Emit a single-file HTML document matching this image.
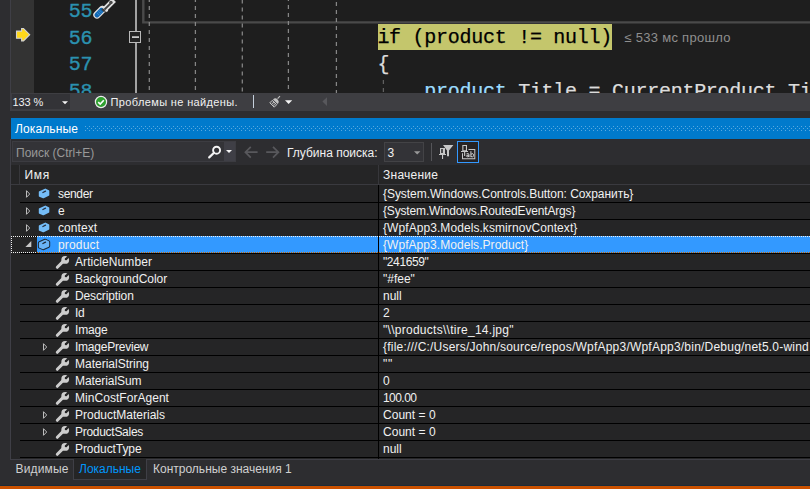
<!DOCTYPE html>
<html><head><meta charset="utf-8">
<style>
html,body{margin:0;padding:0;}
body{width:810px;height:489px;overflow:hidden;background:#2d2d30;position:relative;font-family:"Liberation Sans",sans-serif;font-size:12px;color:#f1f1f1;}
.abs,body>div,body>span,body>svg{position:absolute;}
#editor{left:11px;top:0;width:799px;height:93px;background:#1e1e1e;overflow:hidden;}
#margin{left:11px;top:0;width:23px;height:93px;background:#333333;}
.ln{left:68.8px;font-family:"Liberation Mono",monospace;font-size:20px;letter-spacing:-0.4px;color:#2b91af;-webkit-text-stroke:0.35px #2b91af;line-height:26px;white-space:pre;}
.code{font-family:"Liberation Mono",monospace;font-size:20px;letter-spacing:-0.27px;-webkit-text-stroke:0.25px currentColor;color:#dcdcdc;line-height:26px;white-space:pre;}
.guide{top:0;width:0;height:93px;border-left:1px dashed #7a7a7a;}
#statusrow{left:11px;top:93px;width:799px;height:18px;background:#3e3e42;}
#zoom{left:12px;top:94px;width:58px;height:15px;background:#333337;}
#title{left:11px;top:118px;width:799px;height:21px;background:#007acc;}
#search{left:12px;top:141px;width:224px;height:21px;background:#333337;border:1px solid #3c3c41;box-sizing:border-box;}
#grid{left:11px;top:165px;width:799px;height:294px;background:#252526;}
#hdrline{left:11px;top:184px;width:799px;height:1px;background:#3a3a3f;}
.row{position:absolute;left:0;width:810px;height:17px;}
.row .sep{position:absolute;left:20px;top:16px;width:790px;height:1px;background:#000;}
.row .n{position:absolute;top:0px;line-height:16px;white-space:pre;}
.row .v{position:absolute;left:383px;top:0px;line-height:16px;white-space:pre;}
.row .ic{position:absolute;}
.row .ex{position:absolute;}
.row.sel .selbg{position:absolute;left:37px;top:-1px;width:773px;height:17px;background:#3399ff;}
.row.sel .dots{position:absolute;left:11px;top:-1px;width:799px;height:17px;}
#vline{left:378px;top:185px;width:1px;height:274px;background:#000;}
#orange{left:0;top:486px;width:810px;height:3px;background:#ca5100;}
</style></head><body>
<div id="editor"></div>
<div id="margin"></div>
<div class="ln" style="top:-1.5px">55</div>
<div class="ln" style="top:26px">56</div>
<div class="ln" style="top:52.3px">57</div>
<div class="ln" style="top:79.3px">58</div>
<!-- scope box -->
<svg style="left:0;top:0" width="810" height="93" viewBox="0 0 810 93">
<path d="M143.3 0 L143.3 22.4 L810 22.4" fill="none" stroke="#4a4a4a" stroke-width="2.4"/>
<g stroke="#868686" stroke-width="1.25" stroke-dasharray="4 4" stroke-dashoffset="2">
<line x1="149.3" y1="0" x2="149.3" y2="93"/>
<line x1="195.4" y1="0" x2="195.4" y2="93"/>
<line x1="242.3" y1="0" x2="242.3" y2="93" stroke-dashoffset="0.5"/>
<line x1="288.4" y1="0" x2="288.4" y2="93" stroke-dashoffset="3"/>
<line x1="336.4" y1="0" x2="336.4" y2="93" stroke-dashoffset="6"/>
<line x1="383.4" y1="80" x2="383.4" y2="93" stroke-dashoffset="0" stroke="#606060"/>
</g>
<rect x="135" y="0" width="2" height="93" fill="#a2a2a2"/>
<rect x="129.5" y="31.5" width="11" height="11" fill="#232323" stroke="#b9b9b9" stroke-width="1"/>
<rect x="132" y="36.4" width="7" height="1.4" fill="#f4f4f4"/>
</svg>
<!-- code -->
<div style="left:378px;top:24px;width:234px;height:26px;background:#c4c66c"></div>
<div class="code" style="left:377.4px;top:25.2px;color:#000">if (product != null)</div>
<div class="code" style="left:377.4px;top:51.8px">{</div>
<div class="code" style="left:424.3px;top:78.5px"><span style="color:#9cdcfe">product</span>.Title = CurrentProduct.Title</div>
<div style="left:624.3px;top:30px;line-height:16px;color:#8f8f8f;font-size:13px;letter-spacing:0.3px;white-space:pre">≤ 533 мс прошло</div>

<div id="statusrow"></div>
<div style="left:0;top:111px;width:810px;height:7px;background:#2d2d30"></div>
<div style="left:0;top:93px;width:11px;height:20px;background:#2d2d30"></div>
<div style="left:10px;top:0;width:1px;height:111px;background:#3f3f46"></div>
<div id="zoom"></div>
<div style="left:12.5px;top:95px;line-height:15px;font-size:11px;letter-spacing:-0.1px;white-space:pre">133 %</div>
<div style="left:110.6px;top:95px;line-height:15px;font-size:11px;white-space:pre;letter-spacing:0.36px">Проблемы не найдены.</div>
<div style="left:253px;top:95px;width:1px;height:13px;background:#c5d0dc"></div>


<!-- editor icons -->
<svg style="left:11px;top:24px" width="24" height="22" viewBox="11 24 24 22"><path d="M16.5 31.1 L21.6 31.1 L21.6 28.5 L23.5 28.5 L29.7 34.7 L23.5 40.9 L21.6 40.9 L21.6 38.3 L16.5 38.3 Z" fill="#ffd81a" stroke="#d2d2d2" stroke-width="1.1" stroke-linejoin="miter"/></svg>
<svg style="left:90px;top:0" width="30" height="22" viewBox="90 0 30 22">
<path d="M104.2 9.8 L114 0" stroke="#e2e2e2" stroke-width="5.4" fill="none"/>
<path d="M102.2 5.4 L104.6 7.4 L102.4 9 Z M107.6 8.6 L108.2 11 L105.6 12.4 Z" fill="#e2e2e2"/>
<path d="M97 14.9 L102.2 9.7" stroke="#e2e2e2" stroke-width="7.4" stroke-linecap="round" fill="none"/>
<path d="M104.4 9.6 L110.4 3.6" stroke="#404040" stroke-width="2" fill="none"/>
<circle cx="110.9" cy="2.5" r="1.8" fill="#4a4a4a"/>
<path d="M97 14.9 L101.4 10.5" stroke="#0e67b4" stroke-width="5" stroke-linecap="round" fill="none"/>
<path d="M102.8 8.2 L105.4 10.8 L104 12.2 L101.4 9.6 Z" fill="#3e3e3e"/>
<path d="M98.2 11.4 L100.8 14 M99.6 10.2 L102.2 12.8 M96.9 12.8 L99.4 15.3" stroke="#5f9fd6" stroke-width="0.6" fill="none"/>
</svg>
<!-- status icons -->
<svg style="left:60px;top:99px" width="10" height="7" viewBox="0 0 10 7"><path d="M2 2.2 L8 2.2 L5 5.2 Z" fill="#f4f4f4"/></svg>
<svg style="left:94px;top:95px" width="14" height="14" viewBox="0 0 14 14"><circle cx="7" cy="7" r="5.6" fill="#2fa02f" stroke="#ececec" stroke-width="1.2"/><path d="M4.2 7.2 L6.2 9.1 L9.8 5.2" fill="none" stroke="#fff" stroke-width="1.6"/></svg>
<svg style="left:266px;top:93px" width="30" height="18" viewBox="266 93 30 18">
<path d="M280 96.2 L277.6 98.6" stroke="#c4c4c4" stroke-width="1.1" fill="none"/>
<path d="M273 99.4 A3.2 3.2 0 0 1 277.6 104 Z" fill="#c4c4c4"/>
<path d="M272.3 100.3 L276.7 104.7 L274.2 107.2 L269.8 102.8 Z" fill="#5a5a5e" stroke="#c4c4c4" stroke-width="1"/>
<path d="M271.6 104.4 L274 102 M273 105.8 L275.4 103.4" stroke="#c4c4c4" stroke-width="0.8" fill="none"/>
<path d="M285 100.2 L292.2 100.2 L288.6 104 Z" fill="#f4f4f4"/>
</svg>
<svg style="left:320px;top:95px" width="10" height="14" viewBox="320 95 10 14"><path d="M327 97.2 L327 106 L322.4 101.6 Z" fill="#58585c"/></svg>
<div id="title"></div>
<div style="left:15px;top:122px;line-height:15px;color:#fff;letter-spacing:0.12px;white-space:pre">Локальные</div>
<svg style="left:85px;top:126px" width="725" height="5" viewBox="0 0 725 5"><defs><pattern id="dp" width="4" height="4" patternUnits="userSpaceOnUse"><rect x="0" y="0" width="1" height="1" fill="#5aa9e0"/><rect x="2" y="2" width="1" height="1" fill="#5aa9e0"/></pattern></defs><rect width="725" height="5" fill="url(#dp)"/></svg>
<div id="search"></div>
<div style="left:224px;top:142px;width:11px;height:19px;background:#3f3f46"></div>

<!-- toolbar icons -->
<svg style="left:206px;top:143px" width="32" height="18" viewBox="206 143 32 18">
<circle cx="216.6" cy="150.2" r="3.5" fill="none" stroke="#f4f4f4" stroke-width="1.9"/>
<path d="M214 152.8 L209.2 157.4" stroke="#f4f4f4" stroke-width="2.2" stroke-linecap="round" fill="none"/>
<path d="M226 150 L232 150 L229 153 Z" fill="#f4f4f4"/>
</svg>
<svg style="left:242px;top:143px" width="40" height="18" viewBox="242 143 40 18">
<g stroke="#58585c" stroke-width="1.7" fill="none"><path d="M257.6 152.2 L245.4 152.2 M250.8 146.8 L245.4 152.2 L250.8 157.6"/><path d="M266.2 152.2 L278.4 152.2 M273 146.8 L278.4 152.2 L273 157.6"/></g>
</svg>
<div style="left:16px;top:145px;line-height:16px;color:#999;white-space:pre">Поиск (Ctrl+E)</div>
<div style="left:287px;top:145px;line-height:16px;white-space:pre">Глубина поиска:</div>
<div style="left:384px;top:142px;width:40px;height:20px;box-sizing:border-box;background:#333337;border:1px solid #434346"></div>
<div style="left:387.5px;top:145px;line-height:16px;white-space:pre">3</div>
<svg style="left:412px;top:148px" width="10" height="8" viewBox="412 148 10 8"><path d="M414 151.2 L420.4 151.2 L417.2 154.4 Z" fill="#999"/></svg>
<div style="left:431px;top:143px;width:1px;height:18px;background:#555559"></div>
<div style="left:457px;top:141px;width:22px;height:22px;box-sizing:border-box;background:#262324;border:1px solid #3399ff"></div>


<svg style="left:436px;top:143px" width="44" height="18" viewBox="436 143 44 18">
<g fill="#c6c6c6">
<path d="M440 148 H445 V154 H446 V155 H443.1 V159 H442 V155 H439 V154 H440 Z M441.2 149.1 V153 H442.8 V149.1 Z" fill-rule="evenodd"/>
<path d="M443 145 H453.4 L449 150.6 V156.2 H447 V150.6 Z"/>
<path d="M462.3 145 H467 V151 H468 V152 H465.2 V156 H464.1 V152 H461 V151 H462.3 Z M463.4 146.1 V150.2 H465.9 V146.1 Z" fill-rule="evenodd"/>
<path d="M468.5 148.9 H475.3 V159.2 H462 V153.2 H463 V158.2 H474.3 V149.9 H468.5 Z"/>
</g>
<g fill="none" stroke="#d0d0d0" stroke-width="1"><path d="M466.5 153.9 Q469 152.8 469 154.8 V157.2 M469 155.2 Q466.2 155 466.4 156.2 Q466.8 157.4 469 156.2"/><path d="M470.9 151.2 V157.2 M470.9 154.4 Q473.6 152.5 473.5 155.3 Q473.4 157.9 470.9 156.4"/></g>
</svg>
<div id="grid"></div>
<div style="left:10px;top:139px;width:1px;height:321px;background:#3f3f46"></div>
<div style="left:10px;top:459px;width:800px;height:1px;background:#3f3f46"></div>
<div style="left:19px;top:165px;width:1px;height:19px;background:#37373b"></div>
<div style="left:378px;top:165px;width:1px;height:19px;background:#37373b"></div>
<div style="left:24.5px;top:167px;line-height:16px;letter-spacing:0.7px;white-space:pre">Имя</div>
<div style="left:383px;top:167px;line-height:16px;letter-spacing:0.25px;white-space:pre">Значение</div>
<div id="hdrline"></div>
<div class="row" style="top:186px"><div class="sep"></div><svg class="ex" style="left:25px;top:3px" width="7" height="10" viewBox="0 0 7 10"><path d="M1.5 1.7 L4.7 5 L1.5 8.3 Z" fill="none" stroke="#c4c4c4" stroke-width="0.95" stroke-linejoin="miter"/></svg><svg class="ic" style="left:36px;top:0px" width="16" height="15" viewBox="36 186 16 15"><path d="M39.7 192 L45.3 189.5 L48.4 191 L48.4 195 L43.3 197.4 L39.7 195.9 Z" fill="#75bdf8" stroke="#75bdf8" stroke-width="1.8" stroke-linejoin="round"/><path d="M42.9 192.5 L45.5 191.2" stroke="#253040" stroke-width="1.3" stroke-linecap="round" fill="none"/></svg><span class="n" style="left:58px;letter-spacing:-0.349px">sender</span><span class="v" style="letter-spacing:-0.048px">{System.Windows.Controls.Button: Сохранить}</span></div>
<div class="row" style="top:203px"><div class="sep"></div><svg class="ex" style="left:25px;top:3px" width="7" height="10" viewBox="0 0 7 10"><path d="M1.5 1.7 L4.7 5 L1.5 8.3 Z" fill="none" stroke="#c4c4c4" stroke-width="0.95" stroke-linejoin="miter"/></svg><svg class="ic" style="left:36px;top:0px" width="16" height="15" viewBox="36 186 16 15"><path d="M39.7 192 L45.3 189.5 L48.4 191 L48.4 195 L43.3 197.4 L39.7 195.9 Z" fill="#75bdf8" stroke="#75bdf8" stroke-width="1.8" stroke-linejoin="round"/><path d="M42.9 192.5 L45.5 191.2" stroke="#253040" stroke-width="1.3" stroke-linecap="round" fill="none"/></svg><span class="n" style="left:58px;letter-spacing:0.000px">e</span><span class="v" style="letter-spacing:-0.160px">{System.Windows.RoutedEventArgs}</span></div>
<div class="row" style="top:220px"><div class="sep"></div><svg class="ex" style="left:25px;top:3px" width="7" height="10" viewBox="0 0 7 10"><path d="M1.5 1.7 L4.7 5 L1.5 8.3 Z" fill="none" stroke="#c4c4c4" stroke-width="0.95" stroke-linejoin="miter"/></svg><svg class="ic" style="left:36px;top:0px" width="16" height="15" viewBox="36 186 16 15"><path d="M39.7 192 L45.3 189.5 L48.4 191 L48.4 195 L43.3 197.4 L39.7 195.9 Z" fill="#75bdf8" stroke="#75bdf8" stroke-width="1.8" stroke-linejoin="round"/><path d="M42.9 192.5 L45.5 191.2" stroke="#253040" stroke-width="1.3" stroke-linecap="round" fill="none"/></svg><span class="n" style="left:58px;letter-spacing:0.073px">context</span><span class="v" style="letter-spacing:0.072px">{WpfApp3.Models.ksmirnovContext}</span></div>
<div class="row sel" style="top:237px"><div class="selbg"></div><svg class="dots" width="799" height="17" viewBox="0 0 799 17"><defs><pattern id="dw" width="2" height="2" patternUnits="userSpaceOnUse"><rect x="0" y="0" width="1" height="1" fill="#f0f0f0"/></pattern><pattern id="do" width="2" height="2" patternUnits="userSpaceOnUse"><rect x="0" y="0" width="1" height="1" fill="#cc6600"/></pattern></defs><rect x="0" y="0" width="799" height="1" fill="url(#dw)"/><rect x="0" y="0" width="1" height="17" fill="url(#dw)"/><rect x="0" y="16" width="26" height="1" fill="url(#dw)"/><rect x="26" y="16" width="773" height="1" fill="url(#do)"/></svg><div class="sep"></div><svg class="ex" style="left:23.5px;top:3px" width="8" height="8" viewBox="0 0 8 8"><path d="M7.3 1.1 L7.3 7 L1.4 7 Z" fill="#c8c8c8"/></svg><svg class="ic" style="left:36px;top:0px" width="16" height="15" viewBox="36 186 16 15"><path d="M39.7 192 L45.3 189.5 L48.4 191 L48.4 195 L43.3 197.4 L39.7 195.9 Z" fill="none" stroke="#1b2633" stroke-width="3.6" stroke-linejoin="round"/><path d="M39.7 192 L45.3 189.5 L48.4 191 L48.4 195 L43.3 197.4 L39.7 195.9 Z" fill="#6ab4f6" stroke="#6ab4f6" stroke-width="1.6" stroke-linejoin="round"/><path d="M42.9 192.5 L45.5 191.2" stroke="#1b2633" stroke-width="1.3" stroke-linecap="round" fill="none"/></svg><span class="n" style="left:58px;letter-spacing:0.168px">product</span><span class="v" style="letter-spacing:0.051px">{WpfApp3.Models.Product}</span></div>
<div class="row" style="top:254px"><div class="sep"></div><svg class="ic" style="left:54px;top:1px" width="17" height="15" viewBox="54 255 17 15"><path d="M57.3 267.3 L63.2 261.4" stroke="#cdcdcd" stroke-width="3" stroke-linecap="round" fill="none"/><circle cx="65.2" cy="259.9" r="3.9" fill="#cdcdcd"/><path d="M65.6 259.5 L69.5 255.6" stroke="#252526" stroke-width="2.3" fill="none"/><circle cx="65.9" cy="259.2" r="1.15" fill="#252526"/></svg><span class="n" style="left:75px;letter-spacing:0.075px">ArticleNumber</span><span class="v" style="letter-spacing:-0.408px">"241659"</span></div>
<div class="row" style="top:271px"><div class="sep"></div><svg class="ic" style="left:54px;top:1px" width="17" height="15" viewBox="54 255 17 15"><path d="M57.3 267.3 L63.2 261.4" stroke="#cdcdcd" stroke-width="3" stroke-linecap="round" fill="none"/><circle cx="65.2" cy="259.9" r="3.9" fill="#cdcdcd"/><path d="M65.6 259.5 L69.5 255.6" stroke="#252526" stroke-width="2.3" fill="none"/><circle cx="65.9" cy="259.2" r="1.15" fill="#252526"/></svg><span class="n" style="left:75px;letter-spacing:-0.041px">BackgroundColor</span><span class="v" style="letter-spacing:0.000px">"#fee"</span></div>
<div class="row" style="top:288px"><div class="sep"></div><svg class="ic" style="left:54px;top:1px" width="17" height="15" viewBox="54 255 17 15"><path d="M57.3 267.3 L63.2 261.4" stroke="#cdcdcd" stroke-width="3" stroke-linecap="round" fill="none"/><circle cx="65.2" cy="259.9" r="3.9" fill="#cdcdcd"/><path d="M65.6 259.5 L69.5 255.6" stroke="#252526" stroke-width="2.3" fill="none"/><circle cx="65.9" cy="259.2" r="1.15" fill="#252526"/></svg><span class="n" style="left:75px;letter-spacing:-0.120px">Description</span><span class="v" style="letter-spacing:0.000px">null</span></div>
<div class="row" style="top:305px"><div class="sep"></div><svg class="ic" style="left:54px;top:1px" width="17" height="15" viewBox="54 255 17 15"><path d="M57.3 267.3 L63.2 261.4" stroke="#cdcdcd" stroke-width="3" stroke-linecap="round" fill="none"/><circle cx="65.2" cy="259.9" r="3.9" fill="#cdcdcd"/><path d="M65.6 259.5 L69.5 255.6" stroke="#252526" stroke-width="2.3" fill="none"/><circle cx="65.9" cy="259.2" r="1.15" fill="#252526"/></svg><span class="n" style="left:75px;letter-spacing:-0.454px">Id</span><span class="v" style="letter-spacing:0.000px">2</span></div>
<div class="row" style="top:322px"><div class="sep"></div><svg class="ic" style="left:54px;top:1px" width="17" height="15" viewBox="54 255 17 15"><path d="M57.3 267.3 L63.2 261.4" stroke="#cdcdcd" stroke-width="3" stroke-linecap="round" fill="none"/><circle cx="65.2" cy="259.9" r="3.9" fill="#cdcdcd"/><path d="M65.6 259.5 L69.5 255.6" stroke="#252526" stroke-width="2.3" fill="none"/><circle cx="65.9" cy="259.2" r="1.15" fill="#252526"/></svg><span class="n" style="left:75px;letter-spacing:-0.150px">Image</span><span class="v" style="letter-spacing:0.275px">"\\products\\tire_14.jpg"</span></div>
<div class="row" style="top:339px"><div class="sep"></div><svg class="ex" style="left:42px;top:3px" width="7" height="10" viewBox="0 0 7 10"><path d="M1.5 1.7 L4.7 5 L1.5 8.3 Z" fill="none" stroke="#c4c4c4" stroke-width="0.95" stroke-linejoin="miter"/></svg><svg class="ic" style="left:54px;top:1px" width="17" height="15" viewBox="54 255 17 15"><path d="M57.3 267.3 L63.2 261.4" stroke="#cdcdcd" stroke-width="3" stroke-linecap="round" fill="none"/><circle cx="65.2" cy="259.9" r="3.9" fill="#cdcdcd"/><path d="M65.6 259.5 L69.5 255.6" stroke="#252526" stroke-width="2.3" fill="none"/><circle cx="65.9" cy="259.2" r="1.15" fill="#252526"/></svg><span class="n" style="left:75px;letter-spacing:-0.228px">ImagePreview</span><span class="v" style="letter-spacing:0.216px">{file:///C:/Users/John/source/repos/WpfApp3/WpfApp3/bin/Debug/net5.0-wind</span></div>
<div class="row" style="top:356px"><div class="sep"></div><svg class="ic" style="left:54px;top:1px" width="17" height="15" viewBox="54 255 17 15"><path d="M57.3 267.3 L63.2 261.4" stroke="#cdcdcd" stroke-width="3" stroke-linecap="round" fill="none"/><circle cx="65.2" cy="259.9" r="3.9" fill="#cdcdcd"/><path d="M65.6 259.5 L69.5 255.6" stroke="#252526" stroke-width="2.3" fill="none"/><circle cx="65.9" cy="259.2" r="1.15" fill="#252526"/></svg><span class="n" style="left:75px;letter-spacing:-0.002px">MaterialString</span><span class="v" style="letter-spacing:0.740px">""</span></div>
<div class="row" style="top:373px"><div class="sep"></div><svg class="ic" style="left:54px;top:1px" width="17" height="15" viewBox="54 255 17 15"><path d="M57.3 267.3 L63.2 261.4" stroke="#cdcdcd" stroke-width="3" stroke-linecap="round" fill="none"/><circle cx="65.2" cy="259.9" r="3.9" fill="#cdcdcd"/><path d="M65.6 259.5 L69.5 255.6" stroke="#252526" stroke-width="2.3" fill="none"/><circle cx="65.9" cy="259.2" r="1.15" fill="#252526"/></svg><span class="n" style="left:75px;letter-spacing:-0.078px">MaterialSum</span><span class="v" style="letter-spacing:0.000px">0</span></div>
<div class="row" style="top:390px"><div class="sep"></div><svg class="ic" style="left:54px;top:1px" width="17" height="15" viewBox="54 255 17 15"><path d="M57.3 267.3 L63.2 261.4" stroke="#cdcdcd" stroke-width="3" stroke-linecap="round" fill="none"/><circle cx="65.2" cy="259.9" r="3.9" fill="#cdcdcd"/><path d="M65.6 259.5 L69.5 255.6" stroke="#252526" stroke-width="2.3" fill="none"/><circle cx="65.9" cy="259.2" r="1.15" fill="#252526"/></svg><span class="n" style="left:75px;letter-spacing:0.042px">MinCostForAgent</span><span class="v" style="letter-spacing:-0.551px">100.00</span></div>
<div class="row" style="top:407px"><div class="sep"></div><svg class="ex" style="left:42px;top:3px" width="7" height="10" viewBox="0 0 7 10"><path d="M1.5 1.7 L4.7 5 L1.5 8.3 Z" fill="none" stroke="#c4c4c4" stroke-width="0.95" stroke-linejoin="miter"/></svg><svg class="ic" style="left:54px;top:1px" width="17" height="15" viewBox="54 255 17 15"><path d="M57.3 267.3 L63.2 261.4" stroke="#cdcdcd" stroke-width="3" stroke-linecap="round" fill="none"/><circle cx="65.2" cy="259.9" r="3.9" fill="#cdcdcd"/><path d="M65.6 259.5 L69.5 255.6" stroke="#252526" stroke-width="2.3" fill="none"/><circle cx="65.9" cy="259.2" r="1.15" fill="#252526"/></svg><span class="n" style="left:75px;letter-spacing:-0.002px">ProductMaterials</span><span class="v" style="letter-spacing:0.025px">Count = 0</span></div>
<div class="row" style="top:424px"><div class="sep"></div><svg class="ex" style="left:42px;top:3px" width="7" height="10" viewBox="0 0 7 10"><path d="M1.5 1.7 L4.7 5 L1.5 8.3 Z" fill="none" stroke="#c4c4c4" stroke-width="0.95" stroke-linejoin="miter"/></svg><svg class="ic" style="left:54px;top:1px" width="17" height="15" viewBox="54 255 17 15"><path d="M57.3 267.3 L63.2 261.4" stroke="#cdcdcd" stroke-width="3" stroke-linecap="round" fill="none"/><circle cx="65.2" cy="259.9" r="3.9" fill="#cdcdcd"/><path d="M65.6 259.5 L69.5 255.6" stroke="#252526" stroke-width="2.3" fill="none"/><circle cx="65.9" cy="259.2" r="1.15" fill="#252526"/></svg><span class="n" style="left:75px;letter-spacing:-0.281px">ProductSales</span><span class="v" style="letter-spacing:0.025px">Count = 0</span></div>
<div class="row" style="top:441px"><div class="sep"></div><svg class="ic" style="left:54px;top:1px" width="17" height="15" viewBox="54 255 17 15"><path d="M57.3 267.3 L63.2 261.4" stroke="#cdcdcd" stroke-width="3" stroke-linecap="round" fill="none"/><circle cx="65.2" cy="259.9" r="3.9" fill="#cdcdcd"/><path d="M65.6 259.5 L69.5 255.6" stroke="#252526" stroke-width="2.3" fill="none"/><circle cx="65.9" cy="259.2" r="1.15" fill="#252526"/></svg><span class="n" style="left:75px;letter-spacing:-0.079px">ProductType</span><span class="v" style="letter-spacing:0.000px">null</span></div>
<div id="vline"></div>

<!-- tabs -->
<div style="left:73px;top:459px;width:74px;height:21px;box-sizing:border-box;background:#252526;border:1px solid #3f3f46;border-top:none"></div>
<div style="left:15.5px;top:461px;line-height:16px;color:#d0d0d0;letter-spacing:0.15px;white-space:pre">Видимые</div>
<div style="left:79px;top:461px;line-height:16px;color:#0097fb;white-space:pre">Локальные</div>
<div style="left:153px;top:461px;line-height:16px;color:#d0d0d0;white-space:pre">Контрольные значения 1</div>
<div style="left:0;top:485px;width:810px;height:1px;background:#1c2b38"></div>
<div id="orange"></div>
</body></html>
